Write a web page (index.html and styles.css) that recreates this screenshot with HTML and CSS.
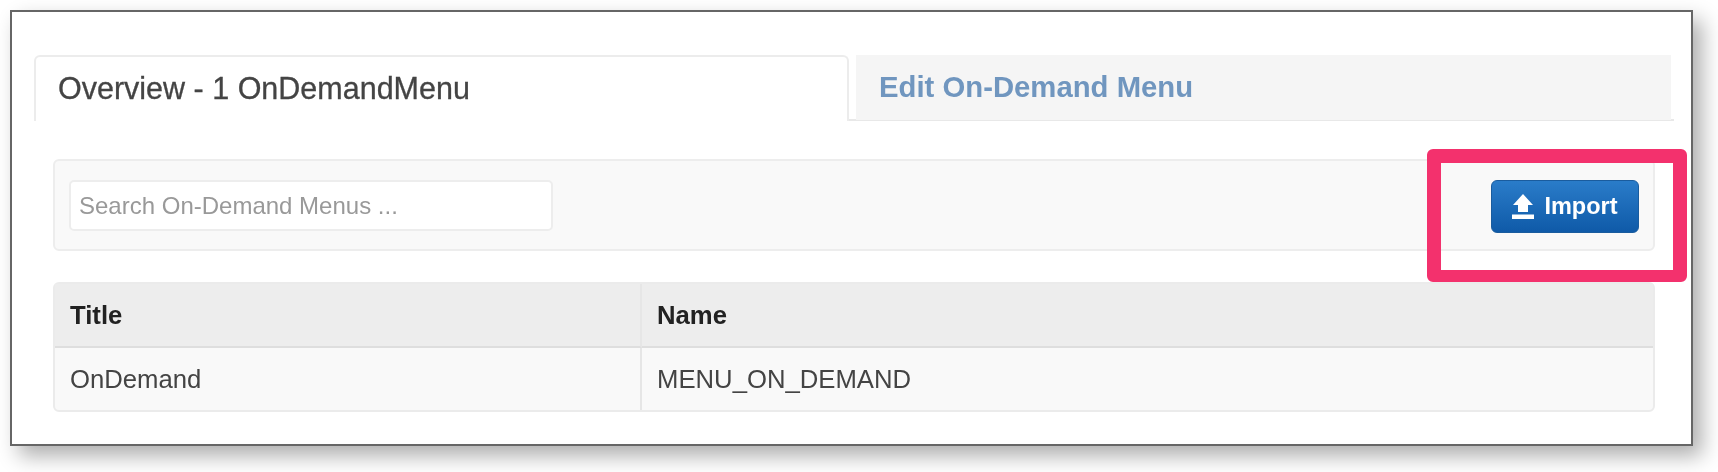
FILE: index.html
```html
<!DOCTYPE html>
<html lang="en">
<head>
<meta charset="utf-8">
<title>On-Demand Menus</title>
<link rel="stylesheet" href="styles.css">
</head>
<body>
<main class="window">
  <nav class="tabs">
    <a class="tab tab-active">Overview - 1 OnDemandMenu</a>
    <a class="tab tab-link">Edit On-Demand Menu</a>
  </nav>
  <section class="content">
    <div class="well">
      <input class="search" type="text" placeholder="Search On-Demand Menus ...">
      <button class="import" type="button">
        <svg class="icon" viewBox="0 0 22 25" aria-hidden="true"><path d="M11 0 21 11H16V18H6V11H1ZM0 20.500H22V25H0Z"/></svg>
        Import
      </button>
    </div>
    <table class="grid">
      <thead>
        <tr><th class="col-title">Title</th><th>Name</th></tr>
      </thead>
      <tbody>
        <tr><td>OnDemand</td><td>MENU_ON_DEMAND</td></tr>
      </tbody>
    </table>
  </section>
  <div class="highlight"></div>
</main>
</body>
</html>
```

FILE: styles.css
```css
* { box-sizing: border-box; }
html, body { margin: 0; background: #fff; }
body {
  height: 472px;
  overflow: hidden;
  padding: 10px 0 0 10px;
  font-family: "Liberation Sans", Arial, sans-serif;
}
.window {
  position: relative;
  width: 1683px;
  height: 436px;
  padding: 43px 17px 0 22px;
  background: #fff;
  border: 2px solid #666;
  box-shadow: 9px 10px 20px rgba(0, 0, 0, .32);
}
.tabs {
  display: flex;
  gap: 7px;
  height: 66px;
  border-bottom: 2px solid #e8e8e8;
}
.tab {
  display: flex;
  align-items: center;
  width: 815px;
  height: 65px;
  padding: 0 0 2px 23px;
  font-size: 28px;
  filter: blur(.6px);
}
.tab-active {
  height: 66px;
  padding-left: 22px;
  color: #444;
  font-size: 30.500px;
  -webkit-text-stroke: .3px #444;
  background: #fff;
  border: 2px solid #ececec;
  border-bottom: 0;
  border-radius: 6px 6px 0 0;
}
.tab-link {
  color: #7096bf;
  font-weight: 700;
  font-size: 29.300px;
  background: #f5f5f5;
}
.content { padding: 0 19px; }
.well {
  display: flex;
  align-items: flex-start;
  justify-content: space-between;
  height: 92px;
  margin-top: 38px;
  padding: 19px 14px 0 14px;
  background: #f9f9f9;
  border: 2px solid #ededed;
  border-radius: 6px;
}
.search {
  width: 484px;
  height: 51px;
  padding: 0 8px;
  font: 24px "Liberation Sans", Arial, sans-serif;
  background: #fff;
  border: 2px solid #ededed;
  border-radius: 5px;
  filter: blur(.6px);
}
.search::placeholder { color: #999; opacity: 1; }
.import {
  display: flex;
  align-items: center;
  justify-content: center;
  gap: 10px;
  width: 148px;
  height: 53px;
  padding: 0;
  color: #fff;
  font: 700 23.500px "Liberation Sans", Arial, sans-serif;
  background: linear-gradient(#2a7cc9, #0f5aa8);
  border: 1px solid #1a5c9e;
  border-radius: 6px;
  filter: blur(.5px);
}
.icon { width: 22px; height: 25px; fill: #fff; }
.grid {
  width: 100%;
  height: 130px;
  margin-top: 31px;
  border-collapse: separate;
  border-spacing: 0;
  border: 2px solid #ebebeb;
  border-radius: 6px;
  font-size: 25.700px;
  background: #f9f9f9;
}
.grid th, .grid td {
  padding: 0 14px 0 15px;
  text-align: left;
  filter: blur(.6px);
}
.grid th {
  height: 64px;
  color: #222;
  background: #ededed;
  border-bottom: 2px solid #dedede;
}
.grid td { color: #444; }
.grid th:first-child, .grid td:first-child { border-right: 2px solid #e6e6e6; }
.col-title { width: 587px; }
.highlight {
  position: absolute;
  left: 1415px;
  top: 137px;
  width: 260px;
  height: 133px;
  border: 14px solid #f3316d;
  border-bottom-width: 12px;
  border-radius: 6px;
}
```
